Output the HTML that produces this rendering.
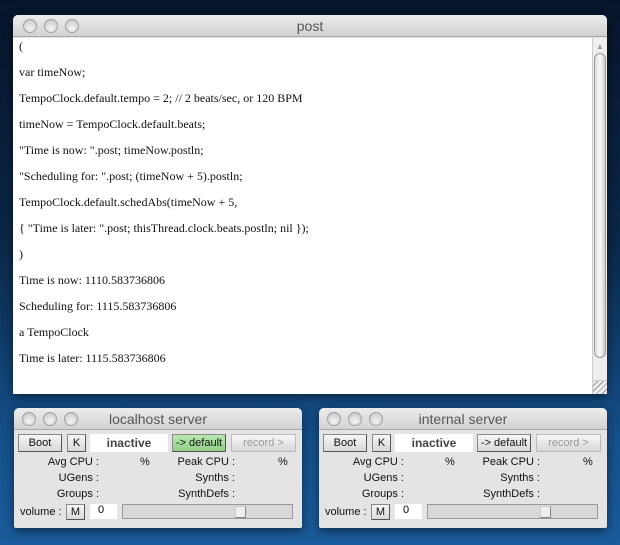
<!DOCTYPE html>
<html><head><style>
*{margin:0;padding:0;box-sizing:border-box}
body{width:620px;height:545px;overflow:hidden;position:relative;background:linear-gradient(#07152a 0%,#0b2848 45%,#15508a 80%,#1a5c9c 100%);font-family:"Liberation Sans",sans-serif}
.win{position:absolute;background:#e4e4e4;border-radius:5px 5px 2px 2px;box-shadow:0 3px 10px rgba(0,0,0,.5)}
.tb{position:absolute;left:0;right:0;top:0;height:22px;background:linear-gradient(#ececec,#d2d2d2);border-radius:5px 5px 0 0;border-bottom:1px solid #a8a8a8;text-align:center;font-size:14px;color:#555;line-height:22px}
.c{position:absolute;top:4px;width:14px;height:14px;border-radius:50%;background:radial-gradient(circle at 50% 70%,#f4f4f4,#c4c4c4);border:1px solid #a0a0a0}
.txt{position:absolute;left:0;top:23px;right:15px;bottom:0;background:#fff;font-family:"Liberation Serif",serif;font-size:12px;color:#111}
.txt div{position:absolute;left:6px;height:14px;line-height:14px;white-space:nowrap}
.sb{position:absolute;right:0;top:23px;width:15px;bottom:0;background:#eee;border-left:1px solid #ccc}
.btn{position:absolute;height:18px;background:linear-gradient(#f6f6f6,#d8d8d8);border:1px solid #8a8a8a;border-right-color:#555;border-bottom-color:#555;font-size:11px;line-height:16px;text-align:center;color:#111}
.lab{position:absolute;font-size:11px;color:#111;text-align:right;line-height:13px}
</style></head><body>

<div class="win" style="left:13px;top:15px;width:594px;height:379px">
<div class="tb">post</div>
<div class="c" style="left:10px"></div><div class="c" style="left:31px"></div><div class="c" style="left:52px"></div>
<div class="txt">
<div style="top:1px">(</div>
<div style="top:27px">var timeNow;</div>
<div style="top:53px">TempoClock.default.tempo = 2; // 2 beats/sec, or 120 BPM</div>
<div style="top:79px">timeNow = TempoClock.default.beats;</div>
<div style="top:105px">"Time is now: ".post; timeNow.postln;</div>
<div style="top:131px">"Scheduling for: ".post; (timeNow + 5).postln;</div>
<div style="top:157px">TempoClock.default.schedAbs(timeNow + 5,</div>
<div style="top:183px">{ "Time is later: ".post; thisThread.clock.beats.postln; nil });</div>
<div style="top:209px">)</div>
<div style="top:235px">Time is now: 1110.583736806</div>
<div style="top:261px">Scheduling for: 1115.583736806</div>
<div style="top:287px">a TempoClock</div>
<div style="top:313px">Time is later: 1115.583736806</div>
</div>
<div class="sb">
<div style="position:absolute;left:3px;top:4px;font-size:8px;color:#999">▲</div>
<div style="position:absolute;left:1px;top:15px;width:12px;height:305px;border-radius:6px;background:linear-gradient(90deg,#ddd,#fafafa,#ccc);border:1px solid #999"></div>
<div style="position:absolute;left:3px;top:342px;font-size:8px;color:#999">▼</div>
<div style="position:absolute;left:0;bottom:0;width:14px;height:14px;border-top:1px solid #ccc;background:repeating-linear-gradient(135deg,#eee 0 3px,#999 3px 4px)"></div>
</div>
</div>

<div class="win" style="left:14px;top:408px;width:288px;height:120px">
<div class="tb">localhost server</div>
<div class="c" style="left:8px"></div><div class="c" style="left:29px"></div><div class="c" style="left:50px"></div>
<div class="btn" style="left:4px;top:26px;width:44px">Boot</div>
<div class="btn" style="left:53px;top:26px;width:19px">K</div>
<div style="position:absolute;left:76px;top:26px;width:78px;height:18px;background:#fff;font-size:12px;font-weight:bold;color:#444;text-align:center;line-height:18px">inactive</div>
<div class="btn" style="left:158px;top:26px;width:54px;background:linear-gradient(#b8e8b0,#90d088)">-&gt; default</div>
<div class="btn" style="left:217px;top:26px;width:65px;color:#999;border-color:#bbb">record &gt;</div>
<div class="lab" style="left:0;width:85px;top:48px">Avg CPU :</div><div class="lab" style="left:126px;top:48px">%</div>
<div class="lab" style="left:120px;width:101px;top:48px">Peak CPU :</div><div class="lab" style="left:264px;top:48px">%</div>
<div class="lab" style="left:0;width:85px;top:64px">UGens :</div><div class="lab" style="left:120px;width:101px;top:64px">Synths :</div>
<div class="lab" style="left:0;width:85px;top:80px">Groups :</div><div class="lab" style="left:120px;width:101px;top:80px">SynthDefs :</div>
<div class="lab" style="left:6px;top:98px">volume :</div>
<div class="btn" style="left:52px;top:96px;width:19px;height:16px;line-height:14px">M</div>
<div style="position:absolute;left:76px;top:96px;width:27px;height:15px;background:#fff;font-size:11px;padding-left:8px;line-height:13px">0</div>
<div style="position:absolute;left:108px;top:96px;width:171px;height:15px;background:#d8d8d8;border:1px solid #999"><div style="position:absolute;left:112px;top:1px;width:11px;height:12px;background:#eee;border:1px solid #888;border-left-color:#ccc;border-top-color:#ccc"></div></div>
</div>

<div class="win" style="left:319px;top:408px;width:288px;height:120px">
<div class="tb">internal server</div>
<div class="c" style="left:8px"></div><div class="c" style="left:29px"></div><div class="c" style="left:50px"></div>
<div class="btn" style="left:4px;top:26px;width:44px">Boot</div>
<div class="btn" style="left:53px;top:26px;width:19px">K</div>
<div style="position:absolute;left:76px;top:26px;width:78px;height:18px;background:#fff;font-size:12px;font-weight:bold;color:#444;text-align:center;line-height:18px">inactive</div>
<div class="btn" style="left:158px;top:26px;width:54px">-&gt; default</div>
<div class="btn" style="left:217px;top:26px;width:65px;color:#999;border-color:#bbb">record &gt;</div>
<div class="lab" style="left:0;width:85px;top:48px">Avg CPU :</div><div class="lab" style="left:126px;top:48px">%</div>
<div class="lab" style="left:120px;width:101px;top:48px">Peak CPU :</div><div class="lab" style="left:264px;top:48px">%</div>
<div class="lab" style="left:0;width:85px;top:64px">UGens :</div><div class="lab" style="left:120px;width:101px;top:64px">Synths :</div>
<div class="lab" style="left:0;width:85px;top:80px">Groups :</div><div class="lab" style="left:120px;width:101px;top:80px">SynthDefs :</div>
<div class="lab" style="left:6px;top:98px">volume :</div>
<div class="btn" style="left:52px;top:96px;width:19px;height:16px;line-height:14px">M</div>
<div style="position:absolute;left:76px;top:96px;width:27px;height:15px;background:#fff;font-size:11px;padding-left:8px;line-height:13px">0</div>
<div style="position:absolute;left:108px;top:96px;width:171px;height:15px;background:#d8d8d8;border:1px solid #999"><div style="position:absolute;left:112px;top:1px;width:11px;height:12px;background:#eee;border:1px solid #888;border-left-color:#ccc;border-top-color:#ccc"></div></div>
</div>

</body></html>
